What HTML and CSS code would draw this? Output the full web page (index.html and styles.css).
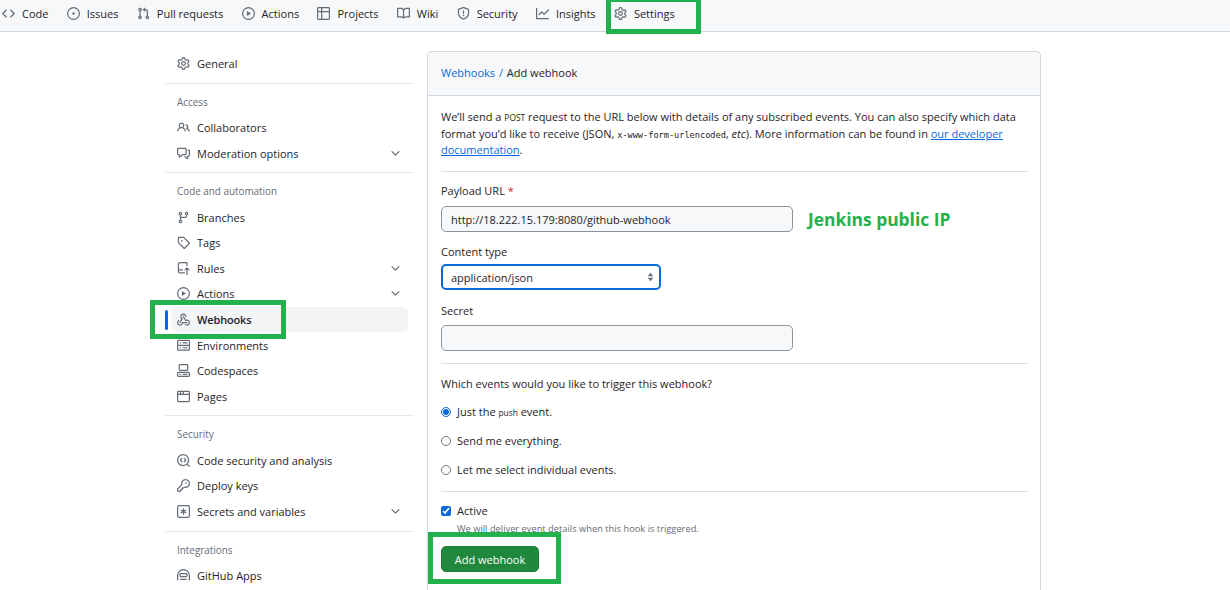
FILE: index.html
```html
<!DOCTYPE html>
<html lang="en">
<head>
  <meta charset="UTF-8">
  <title>Add webhook</title>
  <link rel="stylesheet" href="styles.css">
</head>
<body>
  <!-- Octicon sprite -->
  <svg class="sprite" xmlns="http://www.w3.org/2000/svg">
    <symbol id="i-code" viewBox="0 0 16 16"><path d="m11.28 3.22 4.25 4.25a.75.75 0 0 1 0 1.06l-4.25 4.25a.749.749 0 0 1-1.275-.326.749.749 0 0 1 .215-.734L13.94 8l-3.72-3.72a.749.749 0 0 1 .326-1.275.749.749 0 0 1 .734.215Zm-6.56 0a.751.751 0 0 1 1.042.018.751.751 0 0 1 .018 1.042L2.06 8l3.72 3.72a.749.749 0 0 1-.326 1.275.749.749 0 0 1-.734-.215L.47 8.53a.75.75 0 0 1 0-1.06Z"/></symbol>
    <symbol id="i-issue" viewBox="0 0 16 16"><path d="M8 9.5a1.5 1.5 0 1 0 0-3 1.5 1.5 0 0 0 0 3Z"/><path d="M8 0a8 8 0 1 1 0 16A8 8 0 0 1 8 0ZM1.5 8a6.5 6.5 0 1 0 13 0 6.5 6.5 0 0 0-13 0Z"/></symbol>
    <symbol id="i-pr" viewBox="0 0 16 16"><path d="M1.5 3.25a2.25 2.25 0 1 1 3 2.122v5.256a2.251 2.251 0 1 1-1.5 0V5.372A2.25 2.25 0 0 1 1.5 3.25Zm5.677-.177L9.573.677A.25.25 0 0 1 10 .854V2.5h1A2.5 2.5 0 0 1 13.5 5v5.628a2.251 2.251 0 1 1-1.5 0V5a1 1 0 0 0-1-1h-1v1.646a.25.25 0 0 1-.427.177L7.177 3.427a.25.25 0 0 1 0-.354ZM3.75 2.5a.75.75 0 1 0 0 1.5.75.75 0 0 0 0-1.5Zm0 9.5a.75.75 0 1 0 0 1.5.75.75 0 0 0 0-1.5Zm8.25.75a.75.75 0 1 0 1.5 0 .75.75 0 0 0-1.5 0Z"/></symbol>
    <symbol id="i-play" viewBox="0 0 16 16"><path d="M8 0a8 8 0 1 1 0 16A8 8 0 0 1 8 0ZM1.5 8a6.5 6.5 0 1 0 13 0 6.5 6.5 0 0 0-13 0Zm4.879-2.773 4.264 2.559a.25.25 0 0 1 0 .428l-4.264 2.559A.25.25 0 0 1 6 10.559V5.442a.25.25 0 0 1 .379-.215Z"/></symbol>
    <symbol id="i-table" viewBox="0 0 16 16"><path d="M0 1.75C0 .784.784 0 1.75 0h12.5C15.216 0 16 .784 16 1.75v12.5A1.75 1.75 0 0 1 14.25 16H1.75A1.75 1.75 0 0 1 0 14.25ZM6.5 6.5v8h7.75a.25.25 0 0 0 .25-.25V6.5Zm8-1.5V1.75a.25.25 0 0 0-.25-.25H6.5V5Zm-13 1.5v7.75c0 .138.112.25.25.25H5v-8ZM5 5V1.5H1.75a.25.25 0 0 0-.25.25V5Z"/></symbol>
    <symbol id="i-book" viewBox="0 0 16 16"><path d="M0 1.75A.75.75 0 0 1 .75 1h4.253c1.227 0 2.317.59 3 1.501A3.743 3.743 0 0 1 11.006 1h4.245a.75.75 0 0 1 .75.75v10.5a.75.75 0 0 1-.75.75h-4.507a2.25 2.25 0 0 0-1.591.659l-.622.621a.75.75 0 0 1-1.06 0l-.622-.621A2.25 2.25 0 0 0 5.258 13H.75a.75.75 0 0 1-.75-.75Zm7.251 10.324.004-5.073-.002-2.253A2.25 2.25 0 0 0 5.003 2.5H1.5v9h3.757a3.75 3.75 0 0 1 1.994.574ZM8.755 4.75l-.004 7.322a3.752 3.752 0 0 1 1.992-.572H14.5v-9h-3.495a2.25 2.25 0 0 0-2.25 2.25Z"/></symbol>
    <symbol id="i-shield" viewBox="0 0 16 16"><path d="M7.467.133a1.748 1.748 0 0 1 1.066 0l5.25 1.68A1.75 1.75 0 0 1 15 3.48V7c0 1.566-.32 3.182-1.303 4.682-.983 1.498-2.585 2.813-5.032 3.855a1.697 1.697 0 0 1-1.33 0c-2.447-1.042-4.049-2.357-5.032-3.855C1.32 10.182 1 8.566 1 7V3.48a1.75 1.75 0 0 1 1.217-1.667Zm.61 1.429a.25.25 0 0 0-.153 0l-5.25 1.68a.25.25 0 0 0-.174.238V7c0 1.358.275 2.666 1.057 3.86.784 1.194 2.121 2.34 4.366 3.297a.196.196 0 0 0 .154 0c2.245-.956 3.582-2.104 4.366-3.298C13.225 9.666 13.5 8.36 13.5 7V3.48a.251.251 0 0 0-.174-.237l-5.25-1.68ZM8.75 4.75v3a.75.75 0 0 1-1.5 0v-3a.75.75 0 0 1 1.5 0ZM9 10.5a1 1 0 1 1-2 0 1 1 0 0 1 2 0Z"/></symbol>
    <symbol id="i-graph" viewBox="0 0 16 16"><path d="M1.5 1.75V13.5h13.75a.75.75 0 0 1 0 1.5H.75a.75.75 0 0 1-.75-.75V1.75a.75.75 0 0 1 1.5 0Zm14.28 2.53-5.25 5.25a.75.75 0 0 1-1.06 0L7 7.06 4.28 9.78a.751.751 0 0 1-1.042-.018.751.751 0 0 1-.018-1.042l3.25-3.25a.75.75 0 0 1 1.06 0L10 7.94l4.72-4.72a.751.751 0 0 1 1.042.018.751.751 0 0 1 .018 1.042Z"/></symbol>
    <symbol id="i-gear" viewBox="0 0 16 16"><path d="M8 0a8.2 8.2 0 0 1 .701.031C9.444.095 9.99.645 10.16 1.29l.288 1.107c.018.066.079.158.212.224.231.114.454.243.668.386.123.082.233.09.299.071l1.103-.303c.644-.176 1.392.021 1.82.63.27.385.506.792.704 1.218.315.675.111 1.422-.364 1.891l-.814.806c-.049.048-.098.147-.088.294.016.257.016.515 0 .772-.01.147.038.246.088.294l.814.806c.475.469.679 1.216.364 1.891a7.977 7.977 0 0 1-.704 1.217c-.428.61-1.176.807-1.82.63l-1.102-.302c-.067-.019-.177-.011-.3.071a5.909 5.909 0 0 1-.668.386c-.133.066-.194.158-.211.224l-.29 1.106c-.168.646-.715 1.196-1.458 1.26a8.006 8.006 0 0 1-1.402 0c-.743-.064-1.289-.614-1.458-1.26l-.289-1.106c-.018-.066-.079-.158-.212-.224a5.738 5.738 0 0 1-.668-.386c-.123-.082-.233-.09-.299-.071l-1.103.303c-.644.176-1.392-.021-1.82-.63a8.12 8.12 0 0 1-.704-1.218c-.315-.675-.111-1.422.363-1.891l.815-.806c.05-.048.098-.147.088-.294a6.214 6.214 0 0 1 0-.772c.01-.147-.038-.246-.088-.294l-.815-.806C.635 6.045.431 5.298.746 4.623a7.92 7.92 0 0 1 .704-1.217c.428-.61 1.176-.807 1.82-.63l1.102.302c.067.019.177.011.3-.071.214-.143.437-.272.668-.386.133-.066.194-.158.211-.224l.29-1.106C6.009.645 6.556.095 7.299.03 7.53.01 7.764 0 8 0Zm-.571 1.525c-.036.003-.108.036-.137.146l-.289 1.105c-.147.561-.549.967-.998 1.189-.173.086-.34.183-.5.29-.417.278-.97.423-1.529.27l-1.103-.303c-.109-.03-.175.016-.195.045-.22.312-.412.644-.573.99-.014.031-.021.11.059.19l.815.806c.411.406.562.957.53 1.456a4.709 4.709 0 0 0 0 .582c.032.499-.119 1.05-.53 1.456l-.815.806c-.081.08-.073.159-.059.19.162.346.353.677.573.989.02.03.085.076.195.046l1.102-.303c.56-.153 1.113-.008 1.53.27.161.107.328.204.501.29.447.222.85.629.997 1.189l.289 1.105c.029.109.101.143.137.146a6.6 6.6 0 0 0 1.142 0c.036-.003.108-.036.137-.146l.289-1.105c.147-.561.549-.967.998-1.189.173-.086.34-.183.5-.29.417-.278.97-.423 1.529-.27l1.103.303c.109.029.175-.016.195-.045.22-.313.411-.644.573-.99.014-.031.021-.11-.059-.19l-.815-.806c-.411-.406-.562-.957-.53-1.456a4.709 4.709 0 0 0 0-.582c-.032-.499.119-1.05.53-1.456l.815-.806c.081-.08.073-.159.059-.19a6.464 6.464 0 0 0-.573-.989c-.02-.03-.085-.076-.195-.046l-1.102.303c-.56.153-1.113.008-1.53-.27a4.44 4.44 0 0 0-.501-.29c-.447-.222-.85-.629-.997-1.189l-.289-1.105c-.029-.11-.101-.143-.137-.146a6.6 6.6 0 0 0-1.142 0ZM11 8a3 3 0 1 1-6 0 3 3 0 0 1 6 0ZM9.5 8a1.5 1.5 0 1 0-3.001.001A1.5 1.5 0 0 0 9.5 8Z"/></symbol>
    <symbol id="i-people" viewBox="0 0 16 16"><path d="M2 5.5a3.5 3.5 0 1 1 5.898 2.549 5.508 5.508 0 0 1 3.034 4.084.75.75 0 1 1-1.482.235 4 4 0 0 0-7.9 0 .75.75 0 0 1-1.482-.236A5.507 5.507 0 0 1 3.102 8.05 3.493 3.493 0 0 1 2 5.5ZM11 4a3.001 3.001 0 0 1 2.22 5.018 5.01 5.01 0 0 1 2.56 3.012.749.749 0 0 1-.885.954.752.752 0 0 1-.549-.514 3.507 3.507 0 0 0-2.522-2.372.75.75 0 0 1-.574-.73v-.352a.75.75 0 0 1 .416-.672A1.5 1.5 0 0 0 11 5.5.75.75 0 0 1 11 4Zm-5.5-.5a2 2 0 1 0-.001 3.999A2 2 0 0 0 5.5 3.5Z"/></symbol>
    <symbol id="i-comment" viewBox="0 0 16 16"><path d="M1.75 1h8.5c.966 0 1.75.784 1.75 1.75v5.5A1.75 1.75 0 0 1 10.25 10H7.061l-2.574 2.573A1.458 1.458 0 0 1 2 11.543V10h-.25A1.75 1.75 0 0 1 0 8.25v-5.5C0 1.784.784 1 1.75 1ZM1.5 2.75v5.5c0 .138.112.25.25.25h1a.75.75 0 0 1 .75.75v2.19l2.72-2.72a.749.749 0 0 1 .53-.22h3.5a.25.25 0 0 0 .25-.25v-5.5a.25.25 0 0 0-.25-.25h-8.5a.25.25 0 0 0-.25.25Zm13 2a.25.25 0 0 0-.25-.25h-.5a.75.75 0 0 1 0-1.5h.5c.966 0 1.75.784 1.75 1.75v5.5A1.75 1.75 0 0 1 14.25 12H14v1.543a1.458 1.458 0 0 1-2.487 1.03L9.22 12.28a.749.749 0 0 1 .326-1.275.749.749 0 0 1 .734.215l2.22 2.22v-2.19a.75.75 0 0 1 .75-.75h1a.25.25 0 0 0 .25-.25Z"/></symbol>
    <symbol id="i-branch" viewBox="0 0 16 16"><path d="M9.5 3.25a2.25 2.25 0 1 1 3 2.122V6A2.5 2.5 0 0 1 10 8.5H6a1 1 0 0 0-1 1v1.128a2.251 2.251 0 1 1-1.5 0V5.372a2.25 2.25 0 1 1 1.5 0v1.836A2.493 2.493 0 0 1 6 7h4a1 1 0 0 0 1-1v-.628A2.25 2.25 0 0 1 9.5 3.25Zm-6 0a.75.75 0 1 0 1.5 0 .75.75 0 0 0-1.5 0Zm8.25-.75a.75.75 0 1 0 0 1.5.75.75 0 0 0 0-1.5ZM4.25 12a.75.75 0 1 0 0 1.5.75.75 0 0 0 0-1.5Z"/></symbol>
    <symbol id="i-tag" viewBox="0 0 16 16"><path d="M1 7.775V2.75C1 1.784 1.784 1 2.75 1h5.025c.464 0 .91.184 1.238.513l6.25 6.25a1.75 1.75 0 0 1 0 2.474l-5.026 5.026a1.75 1.75 0 0 1-2.474 0l-6.25-6.25A1.752 1.752 0 0 1 1 7.775Zm1.5 0c0 .066.026.13.073.177l6.25 6.25a.25.25 0 0 0 .354 0l5.025-5.025a.25.25 0 0 0 0-.354l-6.25-6.25a.25.25 0 0 0-.177-.073H2.75a.25.25 0 0 0-.25.25ZM6 5a1 1 0 1 1 0 2 1 1 0 0 1 0-2Z"/></symbol>
    <symbol id="i-rules" viewBox="0 0 16 16"><path d="M1 2.5A2.5 2.5 0 0 1 3.5 0h8.75a.75.75 0 0 1 .75.75v3.5a.75.75 0 0 1-1.5 0V1.5h-8a1 1 0 0 0-1 1v6.708A2.486 2.486 0 0 1 3.5 9h3.25a.75.75 0 0 1 0 1.5H3.5a1 1 0 0 0 0 2h5.75a.75.75 0 0 1 0 1.5H3.5A2.5 2.5 0 0 1 1 11.5Zm13.23 7.79h-.001l-1.224-1.224v6.184a.75.75 0 0 1-1.5 0V9.066L10.28 10.29a.75.75 0 0 1-1.06-1.061l2.505-2.504a.75.75 0 0 1 1.06 0L15.29 9.23a.751.751 0 0 1-.018 1.042.751.751 0 0 1-1.042.018Z"/></symbol>
    <symbol id="i-webhook" viewBox="0 0 16 16"><path d="M5.5 4.25a2.25 2.25 0 0 1 4.5 0 .75.75 0 0 0 1.5 0 3.75 3.75 0 1 0-6.14 2.889l-2.272 4.258a.75.75 0 0 0 1.324.706L7 7.25a.75.75 0 0 0-.309-1.015A2.25 2.25 0 0 1 5.5 4.25Z"/><path d="M7.364 3.607a.75.75 0 0 1 1.03.257l2.608 4.349a3.75 3.75 0 1 1-.628 6.785.75.75 0 0 1 .752-1.299 2.25 2.25 0 1 0-.033-3.88.75.75 0 0 1-1.03-.256L7.107 4.636a.75.75 0 0 1 .257-1.03Z"/><path d="M2.9 8.776A.75.75 0 0 1 2.625 9.8 2.25 2.25 0 1 0 6 11.75a.75.75 0 0 1 .75-.751h5.5a.75.75 0 0 1 0 1.5H7.425a3.751 3.751 0 1 1-5.55-3.998.75.75 0 0 1 1.024.274Z"/></symbol>
    <symbol id="i-server" viewBox="0 0 16 16"><path d="M1.75 1h12.5c.966 0 1.75.784 1.75 1.75v4c0 .372-.116.717-.314 1 .198.283.314.628.314 1v4a1.75 1.75 0 0 1-1.75 1.75H1.75A1.75 1.75 0 0 1 0 13.25v-4c0-.372.116-.717.314-1a1.739 1.739 0 0 1-.314-1v-4C0 1.784.784 1 1.75 1ZM1.5 2.75v4c0 .138.112.25.25.25h12.5a.25.25 0 0 0 .25-.25v-4a.25.25 0 0 0-.25-.25H1.75a.25.25 0 0 0-.25.25Zm.25 5.75a.25.25 0 0 0-.25.25v4c0 .138.112.25.25.25h12.5a.25.25 0 0 0 .25-.25v-4a.25.25 0 0 0-.25-.25ZM7 4.75A.75.75 0 0 1 7.75 4h4.5a.75.75 0 0 1 0 1.5h-4.5A.75.75 0 0 1 7 4.75ZM7.75 10h4.5a.75.75 0 0 1 0 1.5h-4.5a.75.75 0 0 1 0-1.5ZM3 4.75A.75.75 0 0 1 3.75 4h.5a.75.75 0 0 1 0 1.5h-.5A.75.75 0 0 1 3 4.75ZM3.75 10h.5a.75.75 0 0 1 0 1.5h-.5a.75.75 0 0 1 0-1.5Z"/></symbol>
    <symbol id="i-codespaces" viewBox="0 0 16 16"><path d="M0 11.25c0-.966.784-1.75 1.75-1.75h12.5c.966 0 1.75.784 1.75 1.75v3A1.75 1.75 0 0 1 14.25 16H1.75A1.75 1.75 0 0 1 0 14.25Zm2-9.5C2 .784 2.784 0 3.75 0h8.5C13.216 0 14 .784 14 1.75v5a1.75 1.75 0 0 1-1.75 1.75h-8.5A1.75 1.75 0 0 1 2 6.75Zm1.75-.25a.25.25 0 0 0-.25.25v5c0 .138.112.25.25.25h8.5a.25.25 0 0 0 .25-.25v-5a.25.25 0 0 0-.25-.25Zm-2 9.5a.25.25 0 0 0-.25.25v3c0 .138.112.25.25.25h12.5a.25.25 0 0 0 .25-.25v-3a.25.25 0 0 0-.25-.25Z"/><path d="M7 12.75a.75.75 0 0 1 .75-.75h4.5a.75.75 0 0 1 0 1.5h-4.5a.75.75 0 0 1-.75-.75Zm-4 0a.75.75 0 0 1 .75-.75h.5a.75.75 0 0 1 0 1.5h-.5a.75.75 0 0 1-.75-.75Z"/></symbol>
    <symbol id="i-browser" viewBox="0 0 16 16"><path d="M0 2.75C0 1.784.784 1 1.75 1h12.5c.966 0 1.75.784 1.75 1.75v10.5A1.75 1.75 0 0 1 14.25 15H1.75A1.75 1.75 0 0 1 0 13.25ZM14.5 6h-13v7.25c0 .138.112.25.25.25h12.5a.25.25 0 0 0 .25-.25Zm-6-3.5v2h6V2.75a.25.25 0 0 0-.25-.25ZM5 2.5v2h2v-2Zm-3.25 0a.25.25 0 0 0-.25.25V4.5h2v-2Z"/></symbol>
    <symbol id="i-codescan" viewBox="0 0 16 16"><path d="M8.47 4.97a.75.75 0 0 0 0 1.06L9.94 7.5 8.47 8.97a.75.75 0 1 0 1.06 1.06l2-2a.75.75 0 0 0 0-1.06l-2-2a.75.75 0 0 0-1.06 0ZM6.53 6.03a.75.75 0 0 0-1.06-1.06l-2 2a.75.75 0 0 0 0 1.06l2 2a.75.75 0 1 0 1.06-1.06L5.06 7.5l1.47-1.47Z"/><path d="M12.246 13.307a7.501 7.501 0 1 1 1.06-1.06l2.474 2.473a.749.749 0 0 1-.326 1.275.749.749 0 0 1-.734-.215ZM1.5 7.5a6.002 6.002 0 0 0 3.608 5.504 6.002 6.002 0 0 0 6.486-1.117.748.748 0 0 1 .292-.293A6 6 0 1 0 1.5 7.5Z"/></symbol>
    <symbol id="i-key" viewBox="0 0 16 16"><path d="M10.5 0a5.499 5.499 0 1 1-1.288 10.848l-.932.932a.749.749 0 0 1-.53.22H7v.75a.749.749 0 0 1-.22.53l-.5.5a.749.749 0 0 1-.53.22H5v.75a.749.749 0 0 1-.22.53l-.5.5a.749.749 0 0 1-.53.22h-2A1.75 1.75 0 0 1 0 14.25v-2c0-.199.079-.389.22-.53l4.932-4.932A5.5 5.5 0 0 1 10.5 0Zm-4 5.5c-.001.431.069.86.205 1.269a.75.75 0 0 1-.181.768L1.5 12.56v1.69c0 .138.112.25.25.25h1.69l.06-.06v-1.19a.75.75 0 0 1 .75-.75h1.19l.06-.06v-1.19a.75.75 0 0 1 .75-.75h1.19l1.023-1.025a.75.75 0 0 1 .768-.18A4 4 0 1 0 6.5 5.5ZM11 6a1 1 0 1 1 0-2 1 1 0 0 1 0 2Z"/></symbol>
    <symbol id="i-asterisk" viewBox="0 0 16 16"><path d="M0 2.75A2.75 2.75 0 0 1 2.75 0h10.5A2.75 2.75 0 0 1 16 2.75v10.5A2.75 2.75 0 0 1 13.25 16H2.75A2.75 2.75 0 0 1 0 13.25ZM2.75 1.5c-.69 0-1.25.56-1.25 1.25v10.5c0 .69.56 1.25 1.25 1.25h10.5c.69 0 1.25-.56 1.25-1.25V2.75c0-.69-.56-1.25-1.25-1.25Z"/><path d="M8 4a.75.75 0 0 1 .75.75V6.7l1.69-.975a.75.75 0 0 1 .75 1.3L9.5 8l1.69.976a.75.75 0 0 1-.75 1.298L8.75 9.3v1.951a.75.75 0 0 1-1.5 0V9.299l-1.69.976a.75.75 0 0 1-.75-1.3L6.5 8l-1.69-.975a.75.75 0 0 1 .75-1.3l1.69.976V4.75A.75.75 0 0 1 8 4Z"/></symbol>
    <symbol id="i-hubot" viewBox="0 0 16 16"><path d="M0 8a8 8 0 1 1 16 0v5.25a.75.75 0 0 1-1.5 0V8a6.5 6.5 0 1 0-13 0v5.25a.75.75 0 0 1-1.5 0Zm3-1.25C3 5.784 3.784 5 4.75 5h6.5c.966 0 1.75.784 1.75 1.75v1.5A1.75 1.75 0 0 1 11.25 10h-6.5A1.75 1.75 0 0 1 3 8.25Zm1.75-.25a.25.25 0 0 0-.25.25v1.5c0 .138.112.25.25.25h6.5a.25.25 0 0 0 .25-.25v-1.5a.25.25 0 0 0-.25-.25ZM4 12h8v1.5H4Z"/></symbol>
    <symbol id="i-chevron" viewBox="0 0 16 16"><path d="M12.78 5.22a.749.749 0 0 1 0 1.06l-4.25 4.25a.749.749 0 0 1-1.06 0L3.22 6.28a.749.749 0 1 1 1.06-1.06L8 8.939l3.72-3.719a.749.749 0 0 1 1.06 0Z"/></symbol>
  </svg>

  <!-- Repo tabs -->
  <nav class="tabs">
    <a class="tab"><svg class="icon"><use href="#i-code"/></svg>Code</a>
    <a class="tab"><svg class="icon"><use href="#i-issue"/></svg>Issues</a>
    <a class="tab"><svg class="icon"><use href="#i-pr"/></svg>Pull requests</a>
    <a class="tab"><svg class="icon"><use href="#i-play"/></svg>Actions</a>
    <a class="tab"><svg class="icon"><use href="#i-table"/></svg>Projects</a>
    <a class="tab"><svg class="icon"><use href="#i-book"/></svg>Wiki</a>
    <a class="tab"><svg class="icon"><use href="#i-shield"/></svg>Security</a>
    <a class="tab"><svg class="icon"><use href="#i-graph"/></svg>Insights</a>
    <a class="tab"><svg class="icon"><use href="#i-gear"/></svg>Settings</a>
    <span class="callout callout-settings"></span>
  </nav>

  <div class="layout">
    <!-- Settings menu -->
    <aside class="sidebar">
      <a class="item"><svg class="icon"><use href="#i-gear"/></svg>General</a>
      <hr class="side-rule">
      <h3 class="side-label">Access</h3>
      <a class="item"><svg class="icon"><use href="#i-people"/></svg>Collaborators</a>
      <a class="item"><svg class="icon"><use href="#i-comment"/></svg>Moderation options<svg class="chevron"><use href="#i-chevron"/></svg></a>
      <hr class="side-rule">
      <h3 class="side-label">Code and automation</h3>
      <a class="item"><svg class="icon"><use href="#i-branch"/></svg>Branches</a>
      <a class="item"><svg class="icon"><use href="#i-tag"/></svg>Tags</a>
      <a class="item"><svg class="icon"><use href="#i-rules"/></svg>Rules<svg class="chevron"><use href="#i-chevron"/></svg></a>
      <a class="item"><svg class="icon"><use href="#i-play"/></svg>Actions<svg class="chevron"><use href="#i-chevron"/></svg></a>
      <a class="item active"><svg class="icon"><use href="#i-webhook"/></svg>Webhooks</a>
      <a class="item"><svg class="icon"><use href="#i-server"/></svg>Environments</a>
      <a class="item"><svg class="icon"><use href="#i-codespaces"/></svg>Codespaces</a>
      <a class="item"><svg class="icon"><use href="#i-browser"/></svg>Pages</a>
      <hr class="side-rule">
      <h3 class="side-label">Security</h3>
      <a class="item"><svg class="icon"><use href="#i-codescan"/></svg>Code security and analysis</a>
      <a class="item"><svg class="icon"><use href="#i-key"/></svg>Deploy keys</a>
      <a class="item"><svg class="icon"><use href="#i-asterisk"/></svg>Secrets and variables<svg class="chevron"><use href="#i-chevron"/></svg></a>
      <hr class="side-rule">
      <h3 class="side-label">Integrations</h3>
      <a class="item"><svg class="icon"><use href="#i-hubot"/></svg>GitHub Apps</a>
      <span class="callout callout-webhooks"></span>
    </aside>

    <!-- Webhook form -->
    <main class="card">
      <div class="card-head"><a class="link">Webhooks</a> <span class="link slash">/</span> Add webhook</div>
      <form class="card-body">
        <p class="intro">We’ll send a <span class="mono-sm">POST</span> request to the URL below with details of any subscribed events. You can also specify which data<br>format you’d like to receive (JSON, <span class="mono">x-www-form-urlencoded</span>, <em>etc</em>). More information can be found in <a class="link under">our developer</a><br><a class="link under">documentation</a>.</p>
        <hr class="rule rule-intro">

        <label class="field-label">Payload URL <span class="req">*</span></label>
        <div class="url-row">
          <input class="text-input" type="text" value="http://18.222.15.179:8080/github-webhook">
          <span class="note-green">Jenkins public IP</span>
        </div>

        <label class="field-label label-type">Content type</label>
        <div class="select-wrap">
          <select class="select"><option>application/json</option></select>
          <svg class="select-arrow" viewBox="0 0 10 14"><path d="M5 1 9 6H1ZM5 13 1 8h8Z"/></svg>
        </div>

        <label class="field-label label-secret">Secret</label>
        <input class="text-input" type="password">
        <hr class="rule rule-secret">

        <p class="events-title">Which events would you like to trigger this webhook?</p>
        <label class="choice"><input type="radio" name="ev" checked><span>Just the <span class="mono-sm">push</span> event.</span></label>
        <label class="choice"><input type="radio" name="ev"><span>Send me <span class="plain">everything</span>.</span></label>
        <label class="choice"><input type="radio" name="ev"><span>Let me select individual events.</span></label>
        <hr class="rule rule-events">

        <label class="active-row"><input type="checkbox" checked><span>Active</span></label>
        <p class="hint">We will deliver event details when this hook is triggered.</p>
        <button class="submit" type="button">Add webhook</button>
        <span class="callout callout-submit"></span>
      </form>
    </main>
  </div>
</body>
</html>
```

FILE: styles.css
```css
html, body {
  height: 590px;
  overflow: hidden;
}
body {
  margin: 0;
  background: #fff;
  color: #1f2328;
  font-family: "Open Sans", "Noto Sans", sans-serif;
  font-size: 11px;
}
.sprite {
  display: none;
}
.icon {
  width: 13px;
  height: 13px;
  fill: #656d76;
  flex: none;
}

/* top tabs */
.tabs {
  position: relative;
  display: flex;
  align-items: center;
  gap: 18.3px;
  height: 31px;
  padding-left: 2px;
  background: #f6f8fa;
  border-bottom: 1px solid #d0d7de;
}
.tab {
  display: flex;
  align-items: center;
  gap: 7px;
  padding-bottom: 5px;
}

/* green annotation boxes drawn over the screenshot */
.callout {
  position: absolute;
  box-sizing: border-box;
  border: 5px solid #22b14c;
  pointer-events: none;
}
.callout-settings {
  left: 606px;
  top: -3px;
  width: 95px;
  height: 37px;
}
.callout-webhooks {
  left: -15px;
  top: 268px;
  width: 136px;
  height: 39px;
}
.callout-submit {
  left: 0;
  top: 436px;
  width: 133px;
  height: 52px;
}

.layout {
  display: flex;
  gap: 13px;
  padding-left: 165px;
}

/* sidebar */
.sidebar {
  position: relative;
  width: 249px;
  padding-top: 19px;
  flex: none;
}
.item {
  display: flex;
  align-items: center;
  gap: 7px;
  height: 25.6px;
  margin-right: 6px;
  padding-left: 12px;
  position: relative;
  border-radius: 5px;
}
.chevron {
  width: 13px;
  height: 13px;
  fill: #656d76;
  margin-left: auto;
  margin-right: 6px;
}
.item.active {
  margin-left: 6px;
  padding-left: 6px;
  background: #f3f4f6;
  font-weight: 600;
  letter-spacing: -.15px;
}
.item.active::before {
  content: "";
  position: absolute;
  left: -6px;
  top: 3px;
  width: 3px;
  height: 20px;
  border-radius: 2px;
  background: #0969da;
}
.side-rule {
  height: 1px;
  margin: 6.3px 0 0;
  border: 0;
  background: #e4e7eb;
}
.side-label {
  margin: 0;
  padding: 11px 0 6px 12px;
  height: 14px;
  line-height: 14px;
  font-size: 9.9px;
  font-weight: 400;
  color: #656d76;
}

/* card */
.card {
  width: 614px;
  height: 539px;
  margin-top: 19px;
  box-sizing: border-box;
  border: 1px solid #d0d7de;
  border-bottom: 0;
  border-radius: 5px 5px 0 0;
  flex: none;
}
.card-head {
  height: 43px;
  line-height: 42px;
  padding-left: 13px;
  background: #f6f8fa;
  border-bottom: 1px solid #d0d7de;
  border-radius: 5px 5px 0 0;
  font-weight: 500;
}
.slash {
  margin: 0 1px;
}
.link {
  color: #0969da;
}
.under {
  text-decoration: underline;
}
.card-body {
  position: relative;
  padding: 13px 12px 0 13px;
}
.intro {
  margin: 0;
  line-height: 16.6px;
  white-space: nowrap;
}
.mono {
  font-family: "DejaVu Sans Mono", monospace;
  font-size: 8.6px;
  line-height: 0;
}
.mono-sm {
  font-size: 8.4px;
  line-height: 0;
}
.rule {
  height: 1px;
  border: 0;
  margin: 0;
  background: #d8dee4;
}
.rule-intro {
  margin-top: 12.4px;
}
.field-label {
  display: block;
  height: 15px;
  line-height: 15px;
  margin-top: 11px;
}
.label-type {
  margin-top: 12px;
}
.label-secret {
  margin-top: 13px;
}
.url-row {
  display: flex;
  align-items: center;
  gap: 15px;
  margin-top: 8px;
}
.req {
  color: #cf222e;
}
.text-input {
  display: block;
  box-sizing: border-box;
  width: 352px;
  height: 26px;
  padding: 0 9px;
  border: 1px solid #8c959f;
  border-radius: 5px;
  background: #f6f8fa;
  color: #1f2328;
  font: inherit;
}
.label-secret + .text-input {
  margin-top: 7px;
}
.note-green {
  color: #22b14c;
  font-size: 17.4px;
  font-weight: 700;
}
.select-wrap {
  position: relative;
  width: 220px;
  margin-top: 5px;
}
.select {
  display: block;
  box-sizing: border-box;
  width: 100%;
  height: 26px;
  padding: 0 8px;
  border: 2px solid #0969da;
  border-radius: 5px;
  background: #fff;
  color: #1f2328;
  font: inherit;
  appearance: none;
}
.select-arrow {
  position: absolute;
  right: 7px;
  top: 8px;
  width: 7px;
  height: 10px;
  fill: #656d76;
}
.rule-secret {
  margin-top: 12px;
}
.events-title {
  margin: 12px 0 0;
  height: 15px;
  line-height: 15px;
  font-weight: 500;
}
.choice {
  display: flex;
  align-items: center;
  gap: 6px;
  height: 15px;
  margin-top: 14px;
}
.events-title + .choice {
  margin-top: 13px;
}
.choice input, .active-row input {
  width: 10px;
  height: 10px;
  margin: 0;
  accent-color: #0969da;
}
.plain {
  font-weight: 500;
}
.rule-events {
  margin-top: 14px;
}
.active-row {
  display: flex;
  align-items: center;
  gap: 6px;
  height: 15px;
  margin-top: 11px;
}
.hint {
  margin: 4px 0 0 16px;
  height: 13px;
  line-height: 13px;
  font-size: 9.3px;
  color: #656d76;
}
.submit {
  display: block;
  width: 98px;
  height: 26px;
  margin-top: 11px;
  border: 1px solid #1a7f37;
  border-radius: 5px;
  background: #1f883d;
  color: #fff;
  font: inherit;
}
```
